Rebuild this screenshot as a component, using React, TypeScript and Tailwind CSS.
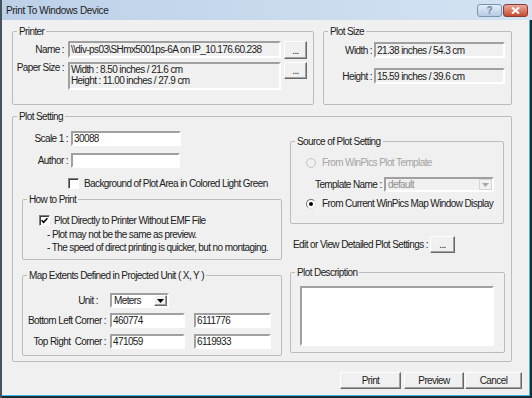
import React from "react";

const sunken = "border-2 border-t-[#a0a0a0] border-l-[#a0a0a0] border-r-white border-b-white";
const raised =
  "border border-t-white border-l-white border-r-[#696969] border-b-[#696969] shadow-[inset_-1px_-1px_0_#a0a0a0]";

type GroupProps = { title: string; className?: string; children?: React.ReactNode };

const Group = ({ title, className = "", children }: GroupProps) => (
  <fieldset className={`border border-[#bcbcbc] rounded-[2px] ${className}`}>
    <legend className="ml-[4px] px-[2px] leading-[13px]">{title}</legend>
    {children}
  </fieldset>
);

const Btn = ({ label, className = "" }: { label: string; className?: string }) => (
  <div className={`${raised} bg-[#f0f0f0] flex items-center justify-center leading-[13px] ${className}`}>
    {label}
  </div>
);

const Field = ({ value = "", className = "", white = false }: { value?: string; className?: string; white?: boolean }) => (
  <div
    className={`${sunken} ${white ? "bg-white" : "bg-[#f0f0f0]"} flex items-center pl-[1px] leading-[11px] whitespace-nowrap overflow-hidden ${className}`}
  >
    {value}
  </div>
);

const Check = ({ checked = false }: { checked?: boolean }) => (
  <span className="flex items-center justify-center w-[11px] h-[11px] bg-white border border-t-[#808080] border-l-[#808080] border-r-white border-b-white shadow-[inset_1px_1px_0_#404040]">
    {checked && (
      <svg width="7" height="7" viewBox="0 0 7 7">
        <path d="M0.6 3.2 L2.6 5.3 L6.4 1.2" stroke="#000" strokeWidth="1.5" fill="none" />
      </svg>
    )}
  </span>
);

const Radio = ({ on = false, disabled = false }: { on?: boolean; disabled?: boolean }) => (
  <span
    className={`flex items-center justify-center w-[10px] h-[10px] rounded-full border ${
      disabled ? "bg-[#f0f0f0] border-[#c4c4c4]" : "bg-white border-t-[#707070] border-l-[#707070] border-r-[#e0e0e0] border-b-[#e0e0e0]"
    }`}
  >
    {on && <span className="w-[4px] h-[4px] rounded-full bg-black" />}
  </span>
);

const Select = ({ value, className = "", disabled = false }: { value: string; className?: string; disabled?: boolean }) => (
  <div
    className={`${sunken} ${disabled ? "bg-[#f0f0f0] text-[#8e8e8e]" : "bg-white"} flex items-stretch leading-[11px] ${className}`}
  >
    <div className="flex-1 flex items-center pl-[2px]">{value}</div>
    <div
      className={`w-[13px] flex items-center justify-center bg-[#f0f0f0] ${
        disabled ? "border border-[#d6d6d6]" : raised
      }`}
    >
      <svg width="7" height="4" viewBox="0 0 7 4">
        <path d="M0 0 H7 L3.5 4 Z" fill={disabled ? "#a8a8a8" : "#000"} />
      </svg>
    </div>
  </div>
);

export default function App() {
  return (
    <div className="w-[532px] h-[398px] flex flex-col bg-[#1e2c36] border-l-2 border-l-[#46525c] text-[10px] leading-[13px] tracking-[-0.6px] text-[#202020] font-['Liberation_Sans',Arial,sans-serif]">
      {/* title bar */}
      <div className="h-[20px] flex items-center bg-gradient-to-r from-[#bcd0e8] to-[#d4e3f3] pl-[4px] pr-[4px]">
        <span className="flex-1 text-[10px] tracking-[-0.35px] text-[#1b1b1b]">Print To Windows Device</span>
        <div className="flex items-center gap-[1px] mt-[1px]">
          <div className="w-[25px] h-[13px] rounded-[3px] border border-[#7d93ae] bg-gradient-to-b from-[#e3edf8] to-[#b7cbe3] flex items-center justify-center">
            <span className="text-[10px] leading-[10px] font-bold tracking-normal text-[#6f84a0]">?</span>
          </div>
          <div className="w-[25px] h-[13px] rounded-[3px] border border-[#8a3a2e] bg-gradient-to-b from-[#e9a899] to-[#c64a33] flex items-center justify-center">
            <svg width="9" height="7" viewBox="0 0 9 7">
              <path d="M1 0.5 L8 6.5 M8 0.5 L1 6.5" stroke="#fff" strokeWidth="2" />
            </svg>
          </div>
        </div>
      </div>

      {/* body */}
      <div className="flex-1 flex flex-col bg-[#f0f0f0] border-r border-b border-[#3fb9e6] mr-[2px] mb-[2px]">
        {/* top row */}
        <div className="flex mt-[5px] ml-[10px]">
          <Group title="Printer" className="w-[302px] h-[80px]">
            <div className="flex mt-[3px]">
              <div className="w-[51px] text-right leading-[17px]">Name :</div>
              <Field value="\\div-ps03\SHmx5001ps-6A on IP_10.176.60.238" className="ml-[4px] w-[213px] h-[17px]" />
              <Btn label="..." className="ml-[3px] w-[23px] h-[18px]" />
            </div>
            <div className="flex mt-[3px]">
              <div className="w-[51px] text-right leading-[11px] whitespace-nowrap">Paper Size :</div>
              <div className={`${sunken} bg-[#f0f0f0] ml-[4px] w-[213px] h-[28px] pl-[1px] leading-[11px]`}>
                <div>Width : 8.50 inches / 21.6 cm</div>
                <div>Height : 11.00 inches / 27.9 cm</div>
              </div>
              <Btn label="..." className="ml-[3px] w-[23px] h-[17px]" />
            </div>
          </Group>

          <Group title="Plot Size" className="ml-[9px] w-[189px] h-[80px]">
            <div className="flex items-center mt-[4px]">
              <div className="w-[48px] text-right">Width :</div>
              <Field value="21.38 inches / 54.3 cm" className="ml-[2px] w-[131px] h-[16px]" />
            </div>
            <div className="flex items-center mt-[10px]">
              <div className="w-[48px] text-right">Height :</div>
              <Field value="15.59 inches / 39.6 cm" className="ml-[2px] w-[131px] h-[16px]" />
            </div>
          </Group>
        </div>

        {/* plot setting */}
        <Group title="Plot Setting" className="mt-[5px] ml-[10px] w-[500px] h-[252px]">
          <div className="flex">
            {/* left column */}
            <div className="w-[277px] flex flex-col">
              <div className="flex items-center mt-[8px]">
                <div className="w-[55px] text-right">Scale 1 :</div>
                <Field white value="30088" className="ml-[3px] w-[110px] h-[15px]" />
              </div>
              <div className="flex items-center mt-[7px]">
                <div className="w-[55px] text-right">Author :</div>
                <Field white className="ml-[3px] w-[109px] h-[15px]" />
              </div>
              <div className="flex items-center mt-[9px] ml-[55px]">
                <Check />
                <span className="ml-[5px] whitespace-nowrap">Background of Plot Area in Colored Light Green</span>
              </div>

              <Group title="How to Print" className="ml-[9px] mt-[3px] w-[260px] h-[67px]">
                <div className="flex items-center mt-[8px] ml-[16px]">
                  <Check checked />
                  <span className="ml-[4px] whitespace-nowrap">Plot Directly to Printer Without EMF File</span>
                </div>
                <div className="ml-[24px] mt-[1px] whitespace-nowrap">
                  <div>- Plot may not be the same as preview.</div>
                  <div>- The speed of direct printing is quicker, but no montaging.</div>
                </div>
              </Group>

              <Group title="Map Extents Defined in Projected Unit ( X, Y )" className="ml-[9px] mt-[9px] w-[260px] h-[87px]">
                <div className="flex items-center mt-[11px]">
                  <div className="w-[75px] text-right">Unit :</div>
                  <Select value="Meters" className="ml-[12px] w-[59px] h-[15px]" />
                </div>
                <div className="flex items-center mt-[5px]">
                  <div className="w-[83px] text-right whitespace-nowrap">Bottom Left Corner :</div>
                  <Field white value="460774" className="ml-[4px] w-[75px] h-[15px]" />
                  <Field white value="6111776" className="ml-[9px] w-[77px] h-[15px]" />
                </div>
                <div className="flex items-center mt-[6px]">
                  <div className="w-[83px] text-right whitespace-pre">Top Right  Corner :</div>
                  <Field white value="471059" className="ml-[4px] w-[75px] h-[15px]" />
                  <Field white value="6119933" className="ml-[9px] w-[77px] h-[15px]" />
                </div>
              </Group>
            </div>

            {/* right column */}
            <div className="flex flex-col">
              <Group title="Source of Plot Setting" className="mt-[12px] w-[214px] h-[89px]">
                <div className="flex items-center mt-[8px] ml-[15px]">
                  <Radio disabled />
                  <span className="ml-[6px] text-[#a3a3a3]">From WinPics Plot Template</span>
                </div>
                <div className="flex items-center mt-[8px] ml-[24px]">
                  <span className="w-[69px] whitespace-nowrap">Template Name :</span>
                  <Select disabled value="default" className="w-[110px] h-[15px]" />
                </div>
                <div className="flex items-center mt-[5px] ml-[15px]">
                  <Radio on />
                  <span className="ml-[6px] whitespace-nowrap">From Current WinPics Map Window Display</span>
                </div>
              </Group>

              <div className="flex items-center mt-[12px] ml-[3px]">
                <span className="w-[137px] whitespace-nowrap">Edit or View Detailed Plot Settings :</span>
                <Btn label="..." className="w-[25px] h-[17px]" />
              </div>

              <Group title="Plot Description" className="mt-[13px] w-[215px] h-[87px]">
                <div className={`${sunken} bg-white mt-[7px] ml-[9px] w-[194px] h-[60px]`} />
              </Group>
            </div>
          </div>
        </Group>

        {/* buttons */}
        <div className="flex justify-end mt-[10px] pr-[7px]">
          <Btn label="Print" className="w-[61px] h-[17px]" />
          <Btn label="Preview" className="ml-[3px] w-[60px] h-[17px]" />
          <Btn label="Cancel" className="ml-[1px] w-[57px] h-[17px]" />
        </div>
      </div>
    </div>
  );
}
